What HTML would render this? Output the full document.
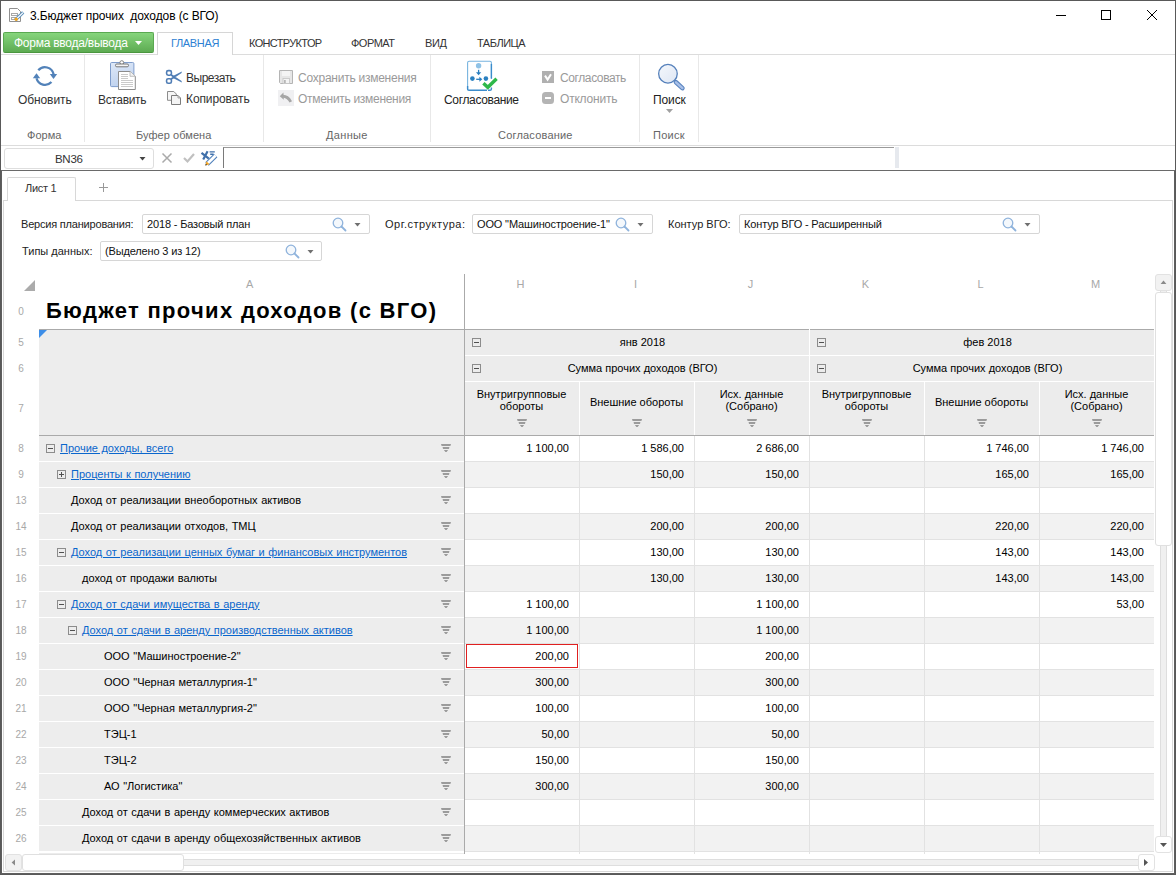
<!DOCTYPE html><html><head><meta charset="utf-8"><style>html,body{margin:0;padding:0}body{width:1176px;height:875px;position:relative;overflow:hidden;background:#fff;font-family:"Liberation Sans", sans-serif}div{box-sizing:border-box}svg{position:absolute;overflow:visible}</style></head><body>
<svg style="left:9px;top:8px" width="16" height="14" viewBox="0 0 16 14"><path d="M0.5 0.5 H8.5 L11.5 3.5 V13.5 H0.5 Z" fill="#fff" stroke="#909090"/><rect x="2.5" y="5.5" width="6" height="2" fill="none" stroke="#a8a8a8"/><rect x="2.5" y="9.5" width="6" height="2" fill="none" stroke="#a8a8a8"/><path d="M6.2 12.2 L14.2 4.4" stroke="#5a8fbd" stroke-width="3.2"/><path d="M6.4 12 L14 4.6" stroke="#fff" stroke-width="1.3"/><circle cx="7.2" cy="11.2" r="1.7" fill="#f2a51e"/></svg>
<div style="position:absolute;left:30px;top:8px;font-size:12px;line-height:16px;color:#000;white-space:nowrap;letter-spacing:-0.1px">3.Бюджет прочих&nbsp; доходов (с ВГО)</div>
<svg style="left:1050px;top:5px" width="120" height="20" viewBox="0 0 120 20"><path d="M6 10.5 H16" stroke="#000" stroke-width="1"/><rect x="51.5" y="5.5" width="9" height="9" fill="none" stroke="#000" stroke-width="1"/><path d="M97 5 L107 15 M107 5 L97 15" stroke="#000" stroke-width="1"/></svg>
<div style="position:absolute;left:3px;top:32px;width:151px;height:21px;border:1px solid #5aa951;border-bottom-color:#4a963f;border-radius:2px;background:linear-gradient(#86d57c,#5dab52)"></div>
<div style="position:absolute;left:14px;top:36px;font-size:12px;line-height:15px;color:#fff;white-space:nowrap;letter-spacing:-0.25px">Форма ввода/вывода</div>
<svg style="left:135px;top:41px" width="7" height="4"><path d="M0 0 H7 L3.5 4 Z" fill="#fff"/></svg>
<div style="position:absolute;left:1px;top:54px;width:1174px;height:1px;background:#dcdcdc"></div>
<div style="position:absolute;left:157px;top:32px;width:76px;height:23px;border:1px solid #d6d6d6;border-bottom:none;background:#fff"></div>
<div style="position:absolute;left:171px;top:36px;font-size:11px;line-height:15px;color:#2d7fd3;white-space:nowrap;letter-spacing:-0.35px">ГЛАВНАЯ</div>
<div style="position:absolute;left:249px;top:36px;font-size:11px;line-height:15px;color:#333;white-space:nowrap;letter-spacing:-0.65px">КОНСТРУКТОР</div>
<div style="position:absolute;left:351px;top:36px;font-size:11px;line-height:15px;color:#333;white-space:nowrap;letter-spacing:-0.5px">ФОРМАТ</div>
<div style="position:absolute;left:425px;top:36px;font-size:11px;line-height:15px;color:#333;white-space:nowrap;letter-spacing:-0.4px">ВИД</div>
<div style="position:absolute;left:477px;top:36px;font-size:11px;line-height:15px;color:#333;white-space:nowrap;letter-spacing:-0.5px">ТАБЛИЦА</div>
<div style="position:absolute;left:84px;top:55px;width:1px;height:87px;background:#e8e8e8"></div>
<div style="position:absolute;left:263px;top:55px;width:1px;height:87px;background:#e8e8e8"></div>
<div style="position:absolute;left:430px;top:55px;width:1px;height:87px;background:#e8e8e8"></div>
<div style="position:absolute;left:639px;top:55px;width:1px;height:87px;background:#e8e8e8"></div>
<div style="position:absolute;left:698px;top:55px;width:1px;height:87px;background:#e8e8e8"></div>
<div style="position:absolute;left:1px;top:145px;width:1174px;height:1px;background:#dcdcdc"></div>
<svg style="left:33px;top:64px" width="25" height="24" viewBox="0 0 25 24"><g fill="none" stroke="#5282b9" stroke-width="2.3"><path d="M5.3 6.3 A8.8 8.8 0 0 1 20.6 10.2"/><path d="M18.45 18 A8.8 8.8 0 0 1 3.5 14.2"/></g><path d="M16.8 10 H24.2 L20.5 15 Z" fill="#5282b9"/><path d="M-0.2 14.3 H7.2 L3.5 9.3 Z" fill="#5282b9"/></svg>
<div style="position:absolute;left:18px;top:93px;font-size:12px;line-height:15px;color:#333;white-space:nowrap;letter-spacing:-0.1px">Обновить</div>
<svg style="left:108px;top:59px" width="30" height="33" viewBox="0 0 30 33"><defs><linearGradient id="pg" x1="0" y1="0" x2="0.3" y2="1"><stop offset="0" stop-color="#dfe9f8"/><stop offset="1" stop-color="#bfd2ee"/></linearGradient></defs><rect x="2.5" y="3.5" width="23.4" height="24.1" rx="1.2" fill="url(#pg)" stroke="#7f9dcc"/><circle cx="13.8" cy="3.6" r="1.9" fill="#fff" stroke="#777" stroke-width="0.9"/><rect x="7.5" y="5" width="13" height="2.8" rx="1.3" fill="#f4f4f4" stroke="#6a6a6a" stroke-width="0.9"/><path d="M10.5 12.5 H22 L27.3 17.3 V30.5 H10.5 Z" fill="#fff" stroke="#8c8c8c"/><path d="M22 12.5 V17.3 H27.3" fill="#f2f2f2" stroke="#b0b0b0" stroke-width="0.8"/><g stroke="#c4c4c4" stroke-width="0.9"><path d="M13 15.5 H20 M13 17.5 H20 M13 19.5 H20 M13 21.5 H25 M13 23.5 H25 M13 25.5 H25 M13 27.5 H25"/></g></svg>
<div style="position:absolute;left:98px;top:93px;font-size:12px;line-height:15px;color:#333;white-space:nowrap;letter-spacing:-0.35px">Вставить</div>
<svg style="left:162px;top:66px" width="24" height="20" viewBox="0 0 24 20"><g fill="none" stroke="#4f7db5" stroke-width="1.6"><rect x="4.6" y="4.6" width="4.8" height="4.6" rx="1.6"/><rect x="4.6" y="12.7" width="4.8" height="4.6" rx="1.6"/></g><path d="M9 8.8 L12 11 L9 13.2" fill="none" stroke="#4f7db5" stroke-width="1.8"/><path d="M11 10 L19.8 5.6 L19.6 7 L12.5 11.8 Z M11 12 L19.8 16.4 L19.6 15 L12.5 10.2 Z" fill="#4f7db5"/><circle cx="12" cy="11" r="1.3" fill="#4f7db5"/></svg>
<div style="position:absolute;left:186px;top:71px;font-size:12px;line-height:15px;color:#333;white-space:nowrap;letter-spacing:-0.5px">Вырезать</div>
<svg style="left:162px;top:86px" width="24" height="22" viewBox="0 0 24 22"><path d="M5.5 5.5 H11.8 L14.3 8 V14.3 H5.5 Z" fill="#f6f6f6" stroke="#8c8c8c"/><path d="M9.5 9.5 H16 L18.5 12 V18.5 H9.5 Z" fill="#f4f4f4" stroke="#7c7c7c"/><path d="M16 9.5 V12 H18.5" fill="none" stroke="#a0a0a0"/></svg>
<div style="position:absolute;left:186px;top:92px;font-size:12px;line-height:15px;color:#333;white-space:nowrap;letter-spacing:-0.1px">Копировать</div>
<svg style="left:274px;top:66px" width="24" height="22" viewBox="0 0 24 22"><path d="M5.5 4.5 H18.5 V17.5 H6.5 L5.5 16.5 Z" fill="#e6e6e6" stroke="#b4b4b4"/><rect x="8" y="5" width="8" height="5" fill="#f4f4f4"/><rect x="9" y="12.5" width="6.5" height="5" fill="#f4f4f4" stroke="#c4c4c4" stroke-width="0.8"/><rect x="10.2" y="14" width="1.4" height="3" fill="#a8a8a8"/></svg>
<div style="position:absolute;left:298px;top:71px;font-size:12px;line-height:15px;color:#9a9a9a;white-space:nowrap;letter-spacing:-0.25px">Сохранить изменения</div>
<svg style="left:274px;top:66px" width="24" height="42" viewBox="0 0 24 42"><rect x="4" y="24" width="16" height="16" fill="#f0f0f2"/><path d="M9.4 26.6 L5.8 30.2 L9.8 33.8 Z" fill="#a6a6a6"/><path d="M8 30.3 Q13.5 29.8 16.8 35.8" fill="none" stroke="#a6a6a6" stroke-width="2.8"/></svg>
<div style="position:absolute;left:298px;top:92px;font-size:12px;line-height:15px;color:#9a9a9a;white-space:nowrap;letter-spacing:-0.3px">Отменить изменения</div>
<svg style="left:458px;top:56px" width="44" height="40" viewBox="0 0 44 40"><path d="M9.6 33.8 V6.8 Q9.6 5.3 11.1 5.3 H32 Q33.4 5.3 33.4 6.8 V23" fill="#fff" stroke="#78b4df" stroke-width="1.1"/><path d="M9.6 30 V33 Q9.6 34.3 11 34.3 H29" fill="none" stroke="#3b8ccc" stroke-width="1.4"/><path d="M33.4 8 V22.5" stroke="#3b8ccc" stroke-width="1.4"/><path d="M33.4 31.5 V33 Q33.4 34.3 32 34.3 H30" fill="none" stroke="#3b8ccc" stroke-width="1.4"/><circle cx="20.6" cy="9.8" r="2.7" fill="#8fc2e6"/><path d="M20.6 13.8 V17" stroke="#2a7fc0" stroke-width="1.3"/><path d="M18 16.2 H23.2 L20.6 19.2 Z" fill="#2a7fc0"/><circle cx="14.4" cy="22.6" r="2.3" fill="#2a80c0"/><circle cx="27.9" cy="22.6" r="2.3" fill="#2a80c0"/><path d="M18.2 23.3 H22.5" stroke="#2a7fc0" stroke-width="1.3"/><path d="M21.4 20.8 V25.8 L24.3 23.3 Z" fill="#2a7fc0"/><path d="M25.4 27.2 L29.8 31.3 L38.6 22.8" fill="none" stroke="#2eb84a" stroke-width="3.4"/></svg>
<div style="position:absolute;left:444px;top:93px;font-size:12px;line-height:15px;color:#222;white-space:nowrap;letter-spacing:-0.35px">Согласование</div>
<svg style="left:542px;top:71px" width="12" height="12" viewBox="0 0 12 12"><rect x="0" y="0" width="12" height="12" fill="#b0b0b0"/><path d="M3 4.6 L5.6 8.6 L9 3.2" fill="none" stroke="#fff" stroke-width="2"/></svg>
<div style="position:absolute;left:560px;top:71px;font-size:12px;line-height:15px;color:#9a9a9a;white-space:nowrap;letter-spacing:-0.4px">Согласовать</div>
<svg style="left:542px;top:92px" width="12" height="12" viewBox="0 0 12 12"><rect x="0" y="0" width="12" height="12" rx="3.5" fill="#b4b4b4"/><rect x="3" y="5" width="6" height="2" fill="#fff"/></svg>
<div style="position:absolute;left:560px;top:92px;font-size:12px;line-height:15px;color:#9a9a9a;white-space:nowrap;letter-spacing:-0.2px">Отклонить</div>
<svg style="left:650px;top:58px" width="40" height="40" viewBox="0 0 40 40"><defs><linearGradient id="sg" x1="0" y1="0" x2="1" y2="1"><stop offset="0" stop-color="#f4f7fc"/><stop offset="1" stop-color="#dfe7f4"/></linearGradient></defs><path d="M26 24.3 L32.4 30.1" stroke="#5a85c0" stroke-width="4.6" stroke-linecap="round"/><path d="M26 24.3 L32.4 30.1" stroke="#a9c0e8" stroke-width="2.4" stroke-linecap="round"/><circle cx="17.95" cy="15.75" r="9.3" fill="url(#sg)" stroke="#5580bb" stroke-width="1.3"/></svg>
<div style="position:absolute;left:653px;top:93px;font-size:12px;line-height:15px;color:#222;white-space:nowrap;letter-spacing:-0.1px">Поиск</div>
<svg style="left:666px;top:109px" width="8" height="5"><path d="M0 0 H7 L3.5 4 Z" fill="#a0a0a0"/></svg>
<div style="position:absolute;left:27px;top:128px;font-size:11px;line-height:15px;color:#666;white-space:nowrap;letter-spacing:0.05px">Форма</div>
<div style="position:absolute;left:136px;top:128px;font-size:11px;line-height:15px;color:#666;white-space:nowrap;letter-spacing:0.05px">Буфер обмена</div>
<div style="position:absolute;left:326px;top:128px;font-size:11px;line-height:15px;color:#666;white-space:nowrap;letter-spacing:0.35px">Данные</div>
<div style="position:absolute;left:498px;top:128px;font-size:11px;line-height:15px;color:#666;white-space:nowrap;letter-spacing:0.2px">Согласование</div>
<div style="position:absolute;left:653px;top:128px;font-size:11px;line-height:15px;color:#666;white-space:nowrap;letter-spacing:0.3px">Поиск</div>
<div style="position:absolute;left:4px;top:148px;width:150px;height:21px;border:1px solid #dedede;border-radius:3px;background:#fff"></div>
<div style="position:absolute;left:55px;top:152px;font-size:11.5px;line-height:15px;color:#333;white-space:nowrap;letter-spacing:-0.3px">BN36</div>
<svg style="left:139px;top:157px" width="7" height="4"><path d="M0.5 0 H6.5 L3.5 3.5 Z" fill="#444"/></svg>
<svg style="left:161px;top:152px" width="12" height="12" viewBox="0 0 12 12"><path d="M1.5 1.5 L10.5 10.5 M10.5 1.5 L1.5 10.5" stroke="#aaa" stroke-width="1.5"/></svg>
<svg style="left:183px;top:152px" width="12" height="12" viewBox="0 0 12 12"><path d="M1 6 L4.5 9.5 L11 2" fill="none" stroke="#c0c0c0" stroke-width="2.2"/></svg>
<svg style="left:196px;top:146px" width="26" height="24" viewBox="0 0 26 24"><path d="M5.5 6.8 L12.8 12.6 M11.6 5.3 L7.2 13.6" stroke="#4070aa" stroke-width="2.2"/><path d="M13.6 5.9 H18.8 M14.2 8.3 H17.5" stroke="#4070aa" stroke-width="1.4"/><path d="M11 18 L19.6 9.4" stroke="#4f80bb" stroke-width="5"/><path d="M11 18 L19.6 9.4" stroke="#fff" stroke-width="2.8"/><path d="M9.4 19.4 L10.4 15.2 L13.6 18.2 Z" fill="#f5a623"/><path d="M9.2 19.6 L9.8 17.6 L11.2 19 Z" fill="#444"/></svg>
<div style="position:absolute;left:223px;top:147px;width:671px;height:21px;border-left:1px solid #7a7a7a;border-top:1px solid #9a9a9a"></div>
<div style="position:absolute;left:895px;top:147px;width:4px;height:21px;background:#e6e9ee"></div>
<div style="position:absolute;left:1px;top:170px;width:1174px;height:1px;background:#6a6a6a"></div>
<div style="position:absolute;left:0px;top:0px;width:1176px;height:875px;border:1px solid #595959"></div>
<div style="position:absolute;left:1px;top:171px;width:1px;height:703px;background:#5f5f5f"></div>
<div style="position:absolute;left:1174px;top:171px;width:1px;height:703px;background:#5f5f5f"></div>
<div style="position:absolute;left:1px;top:873px;width:1174px;height:1px;background:#5f5f5f"></div>
<div style="position:absolute;left:7px;top:177px;width:69px;height:24px;border:1px solid #d8d8d8;border-bottom:none;border-radius:2px 2px 0 0;background:#fff"></div>
<div style="position:absolute;left:25px;top:181px;font-size:11px;line-height:15px;color:#333;white-space:nowrap;letter-spacing:-0.3px">Лист 1</div>
<svg style="left:99px;top:183px" width="9" height="9"><path d="M4.5 0 V9 M0 4.5 H9" stroke="#999" stroke-width="1"/></svg>
<div style="position:absolute;left:3px;top:200px;width:5px;height:1px;background:#d8d8d8"></div>
<div style="position:absolute;left:75px;top:200px;width:1098px;height:1px;background:#d8d8d8"></div>
<div style="position:absolute;left:3px;top:200px;width:1px;height:672px;background:#d8d8d8"></div>
<div style="position:absolute;left:1172px;top:200px;width:1px;height:672px;background:#d8d8d8"></div>
<div style="position:absolute;left:3px;top:871px;width:1170px;height:1px;background:#d8d8d8"></div>
<div style="position:absolute;left:21px;top:217px;font-size:11px;line-height:14px;color:#222;white-space:nowrap;letter-spacing:-0.2px">Версия планирования:</div>
<div style="position:absolute;left:142px;top:214px;width:228px;height:20px;border:1px solid #d6d6d6;border-radius:2px;background:#fff"></div>
<div style="position:absolute;left:147px;top:217px;font-size:11px;line-height:14px;color:#111;white-space:nowrap;letter-spacing:-0.15px">2018 - Базовый план</div>
<svg style="left:332px;top:217px" width="16" height="15" viewBox="0 0 16 15"><circle cx="6" cy="6" r="4.8" fill="#f4f8fc" stroke="#8fb3dc" stroke-width="1.3"/><path d="M9.5 9.5 L13.5 13.5" stroke="#8fb3dc" stroke-width="1.8" stroke-linecap="round"/></svg>
<svg style="left:354px;top:223px" width="7" height="4"><path d="M0.5 0 H6.5 L3.5 3.5 Z" fill="#707070"/></svg>
<div style="position:absolute;left:385px;top:217px;font-size:11px;line-height:14px;color:#222;white-space:nowrap;letter-spacing:0.52px">Орг.структура:</div>
<div style="position:absolute;left:472px;top:214px;width:181px;height:20px;border:1px solid #d6d6d6;border-radius:2px;background:#fff"></div>
<div style="position:absolute;left:477px;top:217px;font-size:11px;line-height:14px;color:#111;white-space:nowrap;letter-spacing:-0.15px">ООО "Машиностроение-1"</div>
<svg style="left:615px;top:217px" width="16" height="15" viewBox="0 0 16 15"><circle cx="6" cy="6" r="4.8" fill="#f4f8fc" stroke="#8fb3dc" stroke-width="1.3"/><path d="M9.5 9.5 L13.5 13.5" stroke="#8fb3dc" stroke-width="1.8" stroke-linecap="round"/></svg>
<svg style="left:637px;top:223px" width="7" height="4"><path d="M0.5 0 H6.5 L3.5 3.5 Z" fill="#707070"/></svg>
<div style="position:absolute;left:668px;top:217px;font-size:11px;line-height:14px;color:#222;white-space:nowrap;letter-spacing:0px">Контур ВГО:</div>
<div style="position:absolute;left:739px;top:214px;width:301px;height:20px;border:1px solid #d6d6d6;border-radius:2px;background:#fff"></div>
<div style="position:absolute;left:744px;top:217px;font-size:11px;line-height:14px;color:#111;white-space:nowrap;letter-spacing:-0.15px">Контур ВГО - Расширенный</div>
<svg style="left:1002px;top:217px" width="16" height="15" viewBox="0 0 16 15"><circle cx="6" cy="6" r="4.8" fill="#f4f8fc" stroke="#8fb3dc" stroke-width="1.3"/><path d="M9.5 9.5 L13.5 13.5" stroke="#8fb3dc" stroke-width="1.8" stroke-linecap="round"/></svg>
<svg style="left:1024px;top:223px" width="7" height="4"><path d="M0.5 0 H6.5 L3.5 3.5 Z" fill="#707070"/></svg>
<div style="position:absolute;left:22px;top:244px;font-size:11px;line-height:14px;color:#222;white-space:nowrap;letter-spacing:0px">Типы данных:</div>
<div style="position:absolute;left:100px;top:241px;width:222px;height:20px;border:1px solid #d6d6d6;border-radius:2px;background:#fff"></div>
<div style="position:absolute;left:105px;top:244px;font-size:11px;line-height:14px;color:#111;white-space:nowrap;letter-spacing:-0.15px">(Выделено 3 из 12)</div>
<svg style="left:285px;top:244px" width="16" height="15" viewBox="0 0 16 15"><circle cx="6" cy="6" r="4.8" fill="#f4f8fc" stroke="#8fb3dc" stroke-width="1.3"/><path d="M9.5 9.5 L13.5 13.5" stroke="#8fb3dc" stroke-width="1.8" stroke-linecap="round"/></svg>
<svg style="left:307px;top:250px" width="7" height="4"><path d="M0.5 0 H6.5 L3.5 3.5 Z" fill="#707070"/></svg>
<div style="position:absolute;left:246px;top:277px;font-size:11px;line-height:14px;color:#a8a8a8;white-space:nowrap;">A</div>
<div style="position:absolute;left:463px;top:277px;width:115px;text-align:center;font-size:11px;line-height:14px;color:#a8a8a8">H</div>
<div style="position:absolute;left:578px;top:277px;width:115px;text-align:center;font-size:11px;line-height:14px;color:#a8a8a8">I</div>
<div style="position:absolute;left:693px;top:277px;width:115px;text-align:center;font-size:11px;line-height:14px;color:#a8a8a8">J</div>
<div style="position:absolute;left:808px;top:277px;width:115px;text-align:center;font-size:11px;line-height:14px;color:#a8a8a8">K</div>
<div style="position:absolute;left:923px;top:277px;width:115px;text-align:center;font-size:11px;line-height:14px;color:#a8a8a8">L</div>
<div style="position:absolute;left:1038px;top:277px;width:115px;text-align:center;font-size:11px;line-height:14px;color:#a8a8a8">M</div>
<svg style="left:24px;top:280px" width="12" height="12"><path d="M11 0 V11 H0 Z" fill="#ababab"/></svg>
<div style="position:absolute;left:464px;top:274px;width:1px;height:580px;background:#aaaaaa"></div>
<div style="position:absolute;left:3px;top:305px;width:36px;text-align:center;font-size:10px;line-height:14px;color:#a8a8a8">0</div>
<div style="position:absolute;left:46px;top:298px;font-size:22px;line-height:26px;color:#000;white-space:nowrap;font-weight:bold;letter-spacing:1.3px">Бюджет прочих доходов (с ВГО)</div>
<div style="position:absolute;left:39px;top:330px;width:425px;height:105px;background:#ededed"></div>
<svg style="left:39px;top:330px" width="9" height="9"><path d="M0 0 H8 L0 8 Z" fill="#3d8ee8"/></svg>
<div style="position:absolute;left:465px;top:330px;width:689px;height:105px;background:#ececec"></div>
<div style="position:absolute;left:39px;top:329px;width:1115px;height:1px;background:#aaaaaa"></div>
<div style="position:absolute;left:39px;top:435px;width:1115px;height:1px;background:#aaaaaa"></div>
<div style="position:absolute;left:465px;top:355px;width:689px;height:1px;background:#fff"></div>
<div style="position:absolute;left:465px;top:381px;width:689px;height:1px;background:#fff"></div>
<div style="position:absolute;left:809px;top:329px;width:1px;height:106px;background:#fff"></div>
<div style="position:absolute;left:579px;top:382px;width:1px;height:53px;background:#fff"></div>
<div style="position:absolute;left:694px;top:382px;width:1px;height:53px;background:#fff"></div>
<div style="position:absolute;left:924px;top:382px;width:1px;height:53px;background:#fff"></div>
<div style="position:absolute;left:1039px;top:382px;width:1px;height:53px;background:#fff"></div>
<svg style="left:472px;top:338px" width="9" height="9" viewBox="0 0 9 9"><rect x="0.5" y="0.5" width="8" height="8" fill="none" stroke="#8c8c8c"/><path d="M2 4.5 H7" stroke="#505050" stroke-width="1"/></svg>
<div style="position:absolute;left:470px;top:335px;width:345px;text-align:center;font-size:11px;line-height:14px;color:#000">янв 2018</div>
<svg style="left:472px;top:364px" width="9" height="9" viewBox="0 0 9 9"><rect x="0.5" y="0.5" width="8" height="8" fill="none" stroke="#8c8c8c"/><path d="M2 4.5 H7" stroke="#505050" stroke-width="1"/></svg>
<div style="position:absolute;left:470px;top:361px;width:345px;text-align:center;font-size:11px;line-height:14px;color:#000">Сумма прочих доходов (ВГО)</div>
<div style="position:absolute;left:464px;top:388px;width:115px;text-align:center;font-size:11px;line-height:12px;color:#000">Внутригрупповые<br>обороты</div>
<svg style="left:517px;top:419px" width="10" height="9" viewBox="0 0 10 9"><path d="M0 0 H10 L9.4 2 H0.6 Z M1.6 3 H8.4 L8 5 H2 Z M2.9 6 H7.1 L5.6 8 H4.4 Z" fill="#9b9b9b"/></svg>
<div style="position:absolute;left:579px;top:396px;width:115px;text-align:center;font-size:11px;line-height:12px;color:#000">Внешние обороты</div>
<svg style="left:632px;top:419px" width="10" height="9" viewBox="0 0 10 9"><path d="M0 0 H10 L9.4 2 H0.6 Z M1.6 3 H8.4 L8 5 H2 Z M2.9 6 H7.1 L5.6 8 H4.4 Z" fill="#9b9b9b"/></svg>
<div style="position:absolute;left:694px;top:388px;width:115px;text-align:center;font-size:11px;line-height:12px;color:#000">Исх. данные<br>(Собрано)</div>
<svg style="left:747px;top:419px" width="10" height="9" viewBox="0 0 10 9"><path d="M0 0 H10 L9.4 2 H0.6 Z M1.6 3 H8.4 L8 5 H2 Z M2.9 6 H7.1 L5.6 8 H4.4 Z" fill="#9b9b9b"/></svg>
<svg style="left:817px;top:338px" width="9" height="9" viewBox="0 0 9 9"><rect x="0.5" y="0.5" width="8" height="8" fill="none" stroke="#8c8c8c"/><path d="M2 4.5 H7" stroke="#505050" stroke-width="1"/></svg>
<div style="position:absolute;left:815px;top:335px;width:345px;text-align:center;font-size:11px;line-height:14px;color:#000">фев 2018</div>
<svg style="left:817px;top:364px" width="9" height="9" viewBox="0 0 9 9"><rect x="0.5" y="0.5" width="8" height="8" fill="none" stroke="#8c8c8c"/><path d="M2 4.5 H7" stroke="#505050" stroke-width="1"/></svg>
<div style="position:absolute;left:815px;top:361px;width:345px;text-align:center;font-size:11px;line-height:14px;color:#000">Сумма прочих доходов (ВГО)</div>
<div style="position:absolute;left:809px;top:388px;width:115px;text-align:center;font-size:11px;line-height:12px;color:#000">Внутригрупповые<br>обороты</div>
<svg style="left:862px;top:419px" width="10" height="9" viewBox="0 0 10 9"><path d="M0 0 H10 L9.4 2 H0.6 Z M1.6 3 H8.4 L8 5 H2 Z M2.9 6 H7.1 L5.6 8 H4.4 Z" fill="#9b9b9b"/></svg>
<div style="position:absolute;left:924px;top:396px;width:115px;text-align:center;font-size:11px;line-height:12px;color:#000">Внешние обороты</div>
<svg style="left:977px;top:419px" width="10" height="9" viewBox="0 0 10 9"><path d="M0 0 H10 L9.4 2 H0.6 Z M1.6 3 H8.4 L8 5 H2 Z M2.9 6 H7.1 L5.6 8 H4.4 Z" fill="#9b9b9b"/></svg>
<div style="position:absolute;left:1039px;top:388px;width:115px;text-align:center;font-size:11px;line-height:12px;color:#000">Исх. данные<br>(Собрано)</div>
<svg style="left:1092px;top:419px" width="10" height="9" viewBox="0 0 10 9"><path d="M0 0 H10 L9.4 2 H0.6 Z M1.6 3 H8.4 L8 5 H2 Z M2.9 6 H7.1 L5.6 8 H4.4 Z" fill="#9b9b9b"/></svg>
<div style="position:absolute;left:3px;top:336px;width:36px;text-align:center;font-size:10px;line-height:14px;color:#a8a8a8">5</div>
<div style="position:absolute;left:3px;top:362px;width:36px;text-align:center;font-size:10px;line-height:14px;color:#a8a8a8">6</div>
<div style="position:absolute;left:3px;top:402px;width:36px;text-align:center;font-size:10px;line-height:14px;color:#a8a8a8">7</div>
<div style="position:absolute;left:39px;top:436px;width:425px;height:25px;background:#ededed"></div>
<div style="position:absolute;left:465px;top:436px;width:689px;height:25px;background:#fff"></div>
<div style="position:absolute;left:465px;top:461px;width:689px;height:1px;background:#e2e2e2"></div>
<div style="position:absolute;left:579px;top:436px;width:1px;height:26px;background:#e2e2e2"></div>
<div style="position:absolute;left:694px;top:436px;width:1px;height:26px;background:#e2e2e2"></div>
<div style="position:absolute;left:809px;top:436px;width:1px;height:26px;background:#e2e2e2"></div>
<div style="position:absolute;left:924px;top:436px;width:1px;height:26px;background:#e2e2e2"></div>
<div style="position:absolute;left:1039px;top:436px;width:1px;height:26px;background:#e2e2e2"></div>
<div style="position:absolute;left:3px;top:442px;width:36px;text-align:center;font-size:10px;line-height:14px;color:#a8a8a8">8</div>
<svg style="left:46px;top:444px" width="9" height="9" viewBox="0 0 9 9"><rect x="0.5" y="0.5" width="8" height="8" fill="none" stroke="#8c8c8c"/><path d="M2 4.5 H7" stroke="#505050" stroke-width="1"/></svg>
<div style="position:absolute;left:60px;top:441px;font-size:11px;line-height:14px;color:#0a66cc;white-space:nowrap;text-decoration:underline;word-spacing:0.5px">Прочие доходы, всего</div>
<svg style="left:441px;top:444px" width="10" height="9" viewBox="0 0 10 9"><path d="M0 0 H10 L9.4 2 H0.6 Z M1.6 3 H8.4 L8 5 H2 Z M2.9 6 H7.1 L5.6 8 H4.4 Z" fill="#9b9b9b"/></svg>
<div style="position:absolute;left:465px;top:441px;width:104px;text-align:right;font-size:11px;line-height:14px;color:#000">1 100,00</div>
<div style="position:absolute;left:580px;top:441px;width:104px;text-align:right;font-size:11px;line-height:14px;color:#000">1 586,00</div>
<div style="position:absolute;left:695px;top:441px;width:104px;text-align:right;font-size:11px;line-height:14px;color:#000">2 686,00</div>
<div style="position:absolute;left:925px;top:441px;width:104px;text-align:right;font-size:11px;line-height:14px;color:#000">1 746,00</div>
<div style="position:absolute;left:1040px;top:441px;width:104px;text-align:right;font-size:11px;line-height:14px;color:#000">1 746,00</div>
<div style="position:absolute;left:39px;top:462px;width:425px;height:25px;background:#ededed"></div>
<div style="position:absolute;left:465px;top:462px;width:689px;height:25px;background:#f2f2f2"></div>
<div style="position:absolute;left:465px;top:487px;width:689px;height:1px;background:#e2e2e2"></div>
<div style="position:absolute;left:579px;top:462px;width:1px;height:26px;background:#e2e2e2"></div>
<div style="position:absolute;left:694px;top:462px;width:1px;height:26px;background:#e2e2e2"></div>
<div style="position:absolute;left:809px;top:462px;width:1px;height:26px;background:#e2e2e2"></div>
<div style="position:absolute;left:924px;top:462px;width:1px;height:26px;background:#e2e2e2"></div>
<div style="position:absolute;left:1039px;top:462px;width:1px;height:26px;background:#e2e2e2"></div>
<div style="position:absolute;left:3px;top:468px;width:36px;text-align:center;font-size:10px;line-height:14px;color:#a8a8a8">9</div>
<svg style="left:57px;top:470px" width="9" height="9" viewBox="0 0 9 9"><rect x="0.5" y="0.5" width="8" height="8" fill="none" stroke="#8c8c8c"/><path d="M2 4.5 H7" stroke="#505050" stroke-width="1"/><path d="M4.5 2 V7" stroke="#505050" stroke-width="1"/></svg>
<div style="position:absolute;left:71px;top:467px;font-size:11px;line-height:14px;color:#0a66cc;white-space:nowrap;text-decoration:underline;word-spacing:0.5px">Проценты к получению</div>
<svg style="left:441px;top:470px" width="10" height="9" viewBox="0 0 10 9"><path d="M0 0 H10 L9.4 2 H0.6 Z M1.6 3 H8.4 L8 5 H2 Z M2.9 6 H7.1 L5.6 8 H4.4 Z" fill="#9b9b9b"/></svg>
<div style="position:absolute;left:580px;top:467px;width:104px;text-align:right;font-size:11px;line-height:14px;color:#000">150,00</div>
<div style="position:absolute;left:695px;top:467px;width:104px;text-align:right;font-size:11px;line-height:14px;color:#000">150,00</div>
<div style="position:absolute;left:925px;top:467px;width:104px;text-align:right;font-size:11px;line-height:14px;color:#000">165,00</div>
<div style="position:absolute;left:1040px;top:467px;width:104px;text-align:right;font-size:11px;line-height:14px;color:#000">165,00</div>
<div style="position:absolute;left:39px;top:488px;width:425px;height:25px;background:#ededed"></div>
<div style="position:absolute;left:465px;top:488px;width:689px;height:25px;background:#fff"></div>
<div style="position:absolute;left:465px;top:513px;width:689px;height:1px;background:#e2e2e2"></div>
<div style="position:absolute;left:579px;top:488px;width:1px;height:26px;background:#e2e2e2"></div>
<div style="position:absolute;left:694px;top:488px;width:1px;height:26px;background:#e2e2e2"></div>
<div style="position:absolute;left:809px;top:488px;width:1px;height:26px;background:#e2e2e2"></div>
<div style="position:absolute;left:924px;top:488px;width:1px;height:26px;background:#e2e2e2"></div>
<div style="position:absolute;left:1039px;top:488px;width:1px;height:26px;background:#e2e2e2"></div>
<div style="position:absolute;left:3px;top:494px;width:36px;text-align:center;font-size:10px;line-height:14px;color:#a8a8a8">13</div>
<div style="position:absolute;left:71px;top:493px;font-size:11px;line-height:14px;color:#000;white-space:nowrap;word-spacing:0.5px">Доход от реализации внеоборотных активов</div>
<svg style="left:441px;top:496px" width="10" height="9" viewBox="0 0 10 9"><path d="M0 0 H10 L9.4 2 H0.6 Z M1.6 3 H8.4 L8 5 H2 Z M2.9 6 H7.1 L5.6 8 H4.4 Z" fill="#9b9b9b"/></svg>
<div style="position:absolute;left:39px;top:514px;width:425px;height:25px;background:#ededed"></div>
<div style="position:absolute;left:465px;top:514px;width:689px;height:25px;background:#f2f2f2"></div>
<div style="position:absolute;left:465px;top:539px;width:689px;height:1px;background:#e2e2e2"></div>
<div style="position:absolute;left:579px;top:514px;width:1px;height:26px;background:#e2e2e2"></div>
<div style="position:absolute;left:694px;top:514px;width:1px;height:26px;background:#e2e2e2"></div>
<div style="position:absolute;left:809px;top:514px;width:1px;height:26px;background:#e2e2e2"></div>
<div style="position:absolute;left:924px;top:514px;width:1px;height:26px;background:#e2e2e2"></div>
<div style="position:absolute;left:1039px;top:514px;width:1px;height:26px;background:#e2e2e2"></div>
<div style="position:absolute;left:3px;top:520px;width:36px;text-align:center;font-size:10px;line-height:14px;color:#a8a8a8">14</div>
<div style="position:absolute;left:71px;top:519px;font-size:11px;line-height:14px;color:#000;white-space:nowrap;word-spacing:0.5px">Доход от реализации отходов, ТМЦ</div>
<svg style="left:441px;top:522px" width="10" height="9" viewBox="0 0 10 9"><path d="M0 0 H10 L9.4 2 H0.6 Z M1.6 3 H8.4 L8 5 H2 Z M2.9 6 H7.1 L5.6 8 H4.4 Z" fill="#9b9b9b"/></svg>
<div style="position:absolute;left:580px;top:519px;width:104px;text-align:right;font-size:11px;line-height:14px;color:#000">200,00</div>
<div style="position:absolute;left:695px;top:519px;width:104px;text-align:right;font-size:11px;line-height:14px;color:#000">200,00</div>
<div style="position:absolute;left:925px;top:519px;width:104px;text-align:right;font-size:11px;line-height:14px;color:#000">220,00</div>
<div style="position:absolute;left:1040px;top:519px;width:104px;text-align:right;font-size:11px;line-height:14px;color:#000">220,00</div>
<div style="position:absolute;left:39px;top:540px;width:425px;height:25px;background:#ededed"></div>
<div style="position:absolute;left:465px;top:540px;width:689px;height:25px;background:#fff"></div>
<div style="position:absolute;left:465px;top:565px;width:689px;height:1px;background:#e2e2e2"></div>
<div style="position:absolute;left:579px;top:540px;width:1px;height:26px;background:#e2e2e2"></div>
<div style="position:absolute;left:694px;top:540px;width:1px;height:26px;background:#e2e2e2"></div>
<div style="position:absolute;left:809px;top:540px;width:1px;height:26px;background:#e2e2e2"></div>
<div style="position:absolute;left:924px;top:540px;width:1px;height:26px;background:#e2e2e2"></div>
<div style="position:absolute;left:1039px;top:540px;width:1px;height:26px;background:#e2e2e2"></div>
<div style="position:absolute;left:3px;top:546px;width:36px;text-align:center;font-size:10px;line-height:14px;color:#a8a8a8">15</div>
<svg style="left:57px;top:548px" width="9" height="9" viewBox="0 0 9 9"><rect x="0.5" y="0.5" width="8" height="8" fill="none" stroke="#8c8c8c"/><path d="M2 4.5 H7" stroke="#505050" stroke-width="1"/></svg>
<div style="position:absolute;left:71px;top:545px;font-size:11px;line-height:14px;color:#0a66cc;white-space:nowrap;text-decoration:underline;word-spacing:0.5px">Доход от реализации ценных бумаг и финансовых инструментов</div>
<svg style="left:441px;top:548px" width="10" height="9" viewBox="0 0 10 9"><path d="M0 0 H10 L9.4 2 H0.6 Z M1.6 3 H8.4 L8 5 H2 Z M2.9 6 H7.1 L5.6 8 H4.4 Z" fill="#9b9b9b"/></svg>
<div style="position:absolute;left:580px;top:545px;width:104px;text-align:right;font-size:11px;line-height:14px;color:#000">130,00</div>
<div style="position:absolute;left:695px;top:545px;width:104px;text-align:right;font-size:11px;line-height:14px;color:#000">130,00</div>
<div style="position:absolute;left:925px;top:545px;width:104px;text-align:right;font-size:11px;line-height:14px;color:#000">143,00</div>
<div style="position:absolute;left:1040px;top:545px;width:104px;text-align:right;font-size:11px;line-height:14px;color:#000">143,00</div>
<div style="position:absolute;left:39px;top:566px;width:425px;height:25px;background:#ededed"></div>
<div style="position:absolute;left:465px;top:566px;width:689px;height:25px;background:#f2f2f2"></div>
<div style="position:absolute;left:465px;top:591px;width:689px;height:1px;background:#e2e2e2"></div>
<div style="position:absolute;left:579px;top:566px;width:1px;height:26px;background:#e2e2e2"></div>
<div style="position:absolute;left:694px;top:566px;width:1px;height:26px;background:#e2e2e2"></div>
<div style="position:absolute;left:809px;top:566px;width:1px;height:26px;background:#e2e2e2"></div>
<div style="position:absolute;left:924px;top:566px;width:1px;height:26px;background:#e2e2e2"></div>
<div style="position:absolute;left:1039px;top:566px;width:1px;height:26px;background:#e2e2e2"></div>
<div style="position:absolute;left:3px;top:572px;width:36px;text-align:center;font-size:10px;line-height:14px;color:#a8a8a8">16</div>
<div style="position:absolute;left:82px;top:571px;font-size:11px;line-height:14px;color:#000;white-space:nowrap;word-spacing:0.5px">доход от продажи валюты</div>
<svg style="left:441px;top:574px" width="10" height="9" viewBox="0 0 10 9"><path d="M0 0 H10 L9.4 2 H0.6 Z M1.6 3 H8.4 L8 5 H2 Z M2.9 6 H7.1 L5.6 8 H4.4 Z" fill="#9b9b9b"/></svg>
<div style="position:absolute;left:580px;top:571px;width:104px;text-align:right;font-size:11px;line-height:14px;color:#000">130,00</div>
<div style="position:absolute;left:695px;top:571px;width:104px;text-align:right;font-size:11px;line-height:14px;color:#000">130,00</div>
<div style="position:absolute;left:925px;top:571px;width:104px;text-align:right;font-size:11px;line-height:14px;color:#000">143,00</div>
<div style="position:absolute;left:1040px;top:571px;width:104px;text-align:right;font-size:11px;line-height:14px;color:#000">143,00</div>
<div style="position:absolute;left:39px;top:592px;width:425px;height:25px;background:#ededed"></div>
<div style="position:absolute;left:465px;top:592px;width:689px;height:25px;background:#fff"></div>
<div style="position:absolute;left:465px;top:617px;width:689px;height:1px;background:#e2e2e2"></div>
<div style="position:absolute;left:579px;top:592px;width:1px;height:26px;background:#e2e2e2"></div>
<div style="position:absolute;left:694px;top:592px;width:1px;height:26px;background:#e2e2e2"></div>
<div style="position:absolute;left:809px;top:592px;width:1px;height:26px;background:#e2e2e2"></div>
<div style="position:absolute;left:924px;top:592px;width:1px;height:26px;background:#e2e2e2"></div>
<div style="position:absolute;left:1039px;top:592px;width:1px;height:26px;background:#e2e2e2"></div>
<div style="position:absolute;left:3px;top:598px;width:36px;text-align:center;font-size:10px;line-height:14px;color:#a8a8a8">17</div>
<svg style="left:57px;top:600px" width="9" height="9" viewBox="0 0 9 9"><rect x="0.5" y="0.5" width="8" height="8" fill="none" stroke="#8c8c8c"/><path d="M2 4.5 H7" stroke="#505050" stroke-width="1"/></svg>
<div style="position:absolute;left:71px;top:597px;font-size:11px;line-height:14px;color:#0a66cc;white-space:nowrap;text-decoration:underline;word-spacing:0.5px">Доход от сдачи имущества в аренду</div>
<svg style="left:441px;top:600px" width="10" height="9" viewBox="0 0 10 9"><path d="M0 0 H10 L9.4 2 H0.6 Z M1.6 3 H8.4 L8 5 H2 Z M2.9 6 H7.1 L5.6 8 H4.4 Z" fill="#9b9b9b"/></svg>
<div style="position:absolute;left:465px;top:597px;width:104px;text-align:right;font-size:11px;line-height:14px;color:#000">1 100,00</div>
<div style="position:absolute;left:695px;top:597px;width:104px;text-align:right;font-size:11px;line-height:14px;color:#000">1 100,00</div>
<div style="position:absolute;left:1040px;top:597px;width:104px;text-align:right;font-size:11px;line-height:14px;color:#000">53,00</div>
<div style="position:absolute;left:39px;top:618px;width:425px;height:25px;background:#ededed"></div>
<div style="position:absolute;left:465px;top:618px;width:689px;height:25px;background:#f2f2f2"></div>
<div style="position:absolute;left:465px;top:643px;width:689px;height:1px;background:#e2e2e2"></div>
<div style="position:absolute;left:579px;top:618px;width:1px;height:26px;background:#e2e2e2"></div>
<div style="position:absolute;left:694px;top:618px;width:1px;height:26px;background:#e2e2e2"></div>
<div style="position:absolute;left:809px;top:618px;width:1px;height:26px;background:#e2e2e2"></div>
<div style="position:absolute;left:924px;top:618px;width:1px;height:26px;background:#e2e2e2"></div>
<div style="position:absolute;left:1039px;top:618px;width:1px;height:26px;background:#e2e2e2"></div>
<div style="position:absolute;left:3px;top:624px;width:36px;text-align:center;font-size:10px;line-height:14px;color:#a8a8a8">18</div>
<svg style="left:68px;top:626px" width="9" height="9" viewBox="0 0 9 9"><rect x="0.5" y="0.5" width="8" height="8" fill="none" stroke="#8c8c8c"/><path d="M2 4.5 H7" stroke="#505050" stroke-width="1"/></svg>
<div style="position:absolute;left:82px;top:623px;font-size:11px;line-height:14px;color:#0a66cc;white-space:nowrap;text-decoration:underline;word-spacing:0.5px">Доход от сдачи в аренду производственных активов</div>
<svg style="left:441px;top:626px" width="10" height="9" viewBox="0 0 10 9"><path d="M0 0 H10 L9.4 2 H0.6 Z M1.6 3 H8.4 L8 5 H2 Z M2.9 6 H7.1 L5.6 8 H4.4 Z" fill="#9b9b9b"/></svg>
<div style="position:absolute;left:465px;top:623px;width:104px;text-align:right;font-size:11px;line-height:14px;color:#000">1 100,00</div>
<div style="position:absolute;left:695px;top:623px;width:104px;text-align:right;font-size:11px;line-height:14px;color:#000">1 100,00</div>
<div style="position:absolute;left:39px;top:644px;width:425px;height:25px;background:#ededed"></div>
<div style="position:absolute;left:465px;top:644px;width:689px;height:25px;background:#fff"></div>
<div style="position:absolute;left:465px;top:669px;width:689px;height:1px;background:#e2e2e2"></div>
<div style="position:absolute;left:579px;top:644px;width:1px;height:26px;background:#e2e2e2"></div>
<div style="position:absolute;left:694px;top:644px;width:1px;height:26px;background:#e2e2e2"></div>
<div style="position:absolute;left:809px;top:644px;width:1px;height:26px;background:#e2e2e2"></div>
<div style="position:absolute;left:924px;top:644px;width:1px;height:26px;background:#e2e2e2"></div>
<div style="position:absolute;left:1039px;top:644px;width:1px;height:26px;background:#e2e2e2"></div>
<div style="position:absolute;left:3px;top:650px;width:36px;text-align:center;font-size:10px;line-height:14px;color:#a8a8a8">19</div>
<div style="position:absolute;left:104px;top:649px;font-size:11px;line-height:14px;color:#000;white-space:nowrap;word-spacing:0.5px">ООО "Машиностроение-2"</div>
<svg style="left:441px;top:652px" width="10" height="9" viewBox="0 0 10 9"><path d="M0 0 H10 L9.4 2 H0.6 Z M1.6 3 H8.4 L8 5 H2 Z M2.9 6 H7.1 L5.6 8 H4.4 Z" fill="#9b9b9b"/></svg>
<div style="position:absolute;left:465px;top:649px;width:104px;text-align:right;font-size:11px;line-height:14px;color:#000">200,00</div>
<div style="position:absolute;left:695px;top:649px;width:104px;text-align:right;font-size:11px;line-height:14px;color:#000">200,00</div>
<div style="position:absolute;left:39px;top:670px;width:425px;height:25px;background:#ededed"></div>
<div style="position:absolute;left:465px;top:670px;width:689px;height:25px;background:#f2f2f2"></div>
<div style="position:absolute;left:465px;top:695px;width:689px;height:1px;background:#e2e2e2"></div>
<div style="position:absolute;left:579px;top:670px;width:1px;height:26px;background:#e2e2e2"></div>
<div style="position:absolute;left:694px;top:670px;width:1px;height:26px;background:#e2e2e2"></div>
<div style="position:absolute;left:809px;top:670px;width:1px;height:26px;background:#e2e2e2"></div>
<div style="position:absolute;left:924px;top:670px;width:1px;height:26px;background:#e2e2e2"></div>
<div style="position:absolute;left:1039px;top:670px;width:1px;height:26px;background:#e2e2e2"></div>
<div style="position:absolute;left:3px;top:676px;width:36px;text-align:center;font-size:10px;line-height:14px;color:#a8a8a8">20</div>
<div style="position:absolute;left:104px;top:675px;font-size:11px;line-height:14px;color:#000;white-space:nowrap;word-spacing:0.5px">ООО "Черная металлургия-1"</div>
<svg style="left:441px;top:678px" width="10" height="9" viewBox="0 0 10 9"><path d="M0 0 H10 L9.4 2 H0.6 Z M1.6 3 H8.4 L8 5 H2 Z M2.9 6 H7.1 L5.6 8 H4.4 Z" fill="#9b9b9b"/></svg>
<div style="position:absolute;left:465px;top:675px;width:104px;text-align:right;font-size:11px;line-height:14px;color:#000">300,00</div>
<div style="position:absolute;left:695px;top:675px;width:104px;text-align:right;font-size:11px;line-height:14px;color:#000">300,00</div>
<div style="position:absolute;left:39px;top:696px;width:425px;height:25px;background:#ededed"></div>
<div style="position:absolute;left:465px;top:696px;width:689px;height:25px;background:#fff"></div>
<div style="position:absolute;left:465px;top:721px;width:689px;height:1px;background:#e2e2e2"></div>
<div style="position:absolute;left:579px;top:696px;width:1px;height:26px;background:#e2e2e2"></div>
<div style="position:absolute;left:694px;top:696px;width:1px;height:26px;background:#e2e2e2"></div>
<div style="position:absolute;left:809px;top:696px;width:1px;height:26px;background:#e2e2e2"></div>
<div style="position:absolute;left:924px;top:696px;width:1px;height:26px;background:#e2e2e2"></div>
<div style="position:absolute;left:1039px;top:696px;width:1px;height:26px;background:#e2e2e2"></div>
<div style="position:absolute;left:3px;top:702px;width:36px;text-align:center;font-size:10px;line-height:14px;color:#a8a8a8">21</div>
<div style="position:absolute;left:104px;top:701px;font-size:11px;line-height:14px;color:#000;white-space:nowrap;word-spacing:0.5px">ООО "Черная металлургия-2"</div>
<svg style="left:441px;top:704px" width="10" height="9" viewBox="0 0 10 9"><path d="M0 0 H10 L9.4 2 H0.6 Z M1.6 3 H8.4 L8 5 H2 Z M2.9 6 H7.1 L5.6 8 H4.4 Z" fill="#9b9b9b"/></svg>
<div style="position:absolute;left:465px;top:701px;width:104px;text-align:right;font-size:11px;line-height:14px;color:#000">100,00</div>
<div style="position:absolute;left:695px;top:701px;width:104px;text-align:right;font-size:11px;line-height:14px;color:#000">100,00</div>
<div style="position:absolute;left:39px;top:722px;width:425px;height:25px;background:#ededed"></div>
<div style="position:absolute;left:465px;top:722px;width:689px;height:25px;background:#f2f2f2"></div>
<div style="position:absolute;left:465px;top:747px;width:689px;height:1px;background:#e2e2e2"></div>
<div style="position:absolute;left:579px;top:722px;width:1px;height:26px;background:#e2e2e2"></div>
<div style="position:absolute;left:694px;top:722px;width:1px;height:26px;background:#e2e2e2"></div>
<div style="position:absolute;left:809px;top:722px;width:1px;height:26px;background:#e2e2e2"></div>
<div style="position:absolute;left:924px;top:722px;width:1px;height:26px;background:#e2e2e2"></div>
<div style="position:absolute;left:1039px;top:722px;width:1px;height:26px;background:#e2e2e2"></div>
<div style="position:absolute;left:3px;top:728px;width:36px;text-align:center;font-size:10px;line-height:14px;color:#a8a8a8">22</div>
<div style="position:absolute;left:104px;top:727px;font-size:11px;line-height:14px;color:#000;white-space:nowrap;word-spacing:0.5px">ТЭЦ-1</div>
<svg style="left:441px;top:730px" width="10" height="9" viewBox="0 0 10 9"><path d="M0 0 H10 L9.4 2 H0.6 Z M1.6 3 H8.4 L8 5 H2 Z M2.9 6 H7.1 L5.6 8 H4.4 Z" fill="#9b9b9b"/></svg>
<div style="position:absolute;left:465px;top:727px;width:104px;text-align:right;font-size:11px;line-height:14px;color:#000">50,00</div>
<div style="position:absolute;left:695px;top:727px;width:104px;text-align:right;font-size:11px;line-height:14px;color:#000">50,00</div>
<div style="position:absolute;left:39px;top:748px;width:425px;height:25px;background:#ededed"></div>
<div style="position:absolute;left:465px;top:748px;width:689px;height:25px;background:#fff"></div>
<div style="position:absolute;left:465px;top:773px;width:689px;height:1px;background:#e2e2e2"></div>
<div style="position:absolute;left:579px;top:748px;width:1px;height:26px;background:#e2e2e2"></div>
<div style="position:absolute;left:694px;top:748px;width:1px;height:26px;background:#e2e2e2"></div>
<div style="position:absolute;left:809px;top:748px;width:1px;height:26px;background:#e2e2e2"></div>
<div style="position:absolute;left:924px;top:748px;width:1px;height:26px;background:#e2e2e2"></div>
<div style="position:absolute;left:1039px;top:748px;width:1px;height:26px;background:#e2e2e2"></div>
<div style="position:absolute;left:3px;top:754px;width:36px;text-align:center;font-size:10px;line-height:14px;color:#a8a8a8">23</div>
<div style="position:absolute;left:104px;top:753px;font-size:11px;line-height:14px;color:#000;white-space:nowrap;word-spacing:0.5px">ТЭЦ-2</div>
<svg style="left:441px;top:756px" width="10" height="9" viewBox="0 0 10 9"><path d="M0 0 H10 L9.4 2 H0.6 Z M1.6 3 H8.4 L8 5 H2 Z M2.9 6 H7.1 L5.6 8 H4.4 Z" fill="#9b9b9b"/></svg>
<div style="position:absolute;left:465px;top:753px;width:104px;text-align:right;font-size:11px;line-height:14px;color:#000">150,00</div>
<div style="position:absolute;left:695px;top:753px;width:104px;text-align:right;font-size:11px;line-height:14px;color:#000">150,00</div>
<div style="position:absolute;left:39px;top:774px;width:425px;height:25px;background:#ededed"></div>
<div style="position:absolute;left:465px;top:774px;width:689px;height:25px;background:#f2f2f2"></div>
<div style="position:absolute;left:465px;top:799px;width:689px;height:1px;background:#e2e2e2"></div>
<div style="position:absolute;left:579px;top:774px;width:1px;height:26px;background:#e2e2e2"></div>
<div style="position:absolute;left:694px;top:774px;width:1px;height:26px;background:#e2e2e2"></div>
<div style="position:absolute;left:809px;top:774px;width:1px;height:26px;background:#e2e2e2"></div>
<div style="position:absolute;left:924px;top:774px;width:1px;height:26px;background:#e2e2e2"></div>
<div style="position:absolute;left:1039px;top:774px;width:1px;height:26px;background:#e2e2e2"></div>
<div style="position:absolute;left:3px;top:780px;width:36px;text-align:center;font-size:10px;line-height:14px;color:#a8a8a8">24</div>
<div style="position:absolute;left:104px;top:779px;font-size:11px;line-height:14px;color:#000;white-space:nowrap;word-spacing:0.5px">АО "Логистика"</div>
<svg style="left:441px;top:782px" width="10" height="9" viewBox="0 0 10 9"><path d="M0 0 H10 L9.4 2 H0.6 Z M1.6 3 H8.4 L8 5 H2 Z M2.9 6 H7.1 L5.6 8 H4.4 Z" fill="#9b9b9b"/></svg>
<div style="position:absolute;left:465px;top:779px;width:104px;text-align:right;font-size:11px;line-height:14px;color:#000">300,00</div>
<div style="position:absolute;left:695px;top:779px;width:104px;text-align:right;font-size:11px;line-height:14px;color:#000">300,00</div>
<div style="position:absolute;left:39px;top:800px;width:425px;height:25px;background:#ededed"></div>
<div style="position:absolute;left:465px;top:800px;width:689px;height:25px;background:#fff"></div>
<div style="position:absolute;left:465px;top:825px;width:689px;height:1px;background:#e2e2e2"></div>
<div style="position:absolute;left:579px;top:800px;width:1px;height:26px;background:#e2e2e2"></div>
<div style="position:absolute;left:694px;top:800px;width:1px;height:26px;background:#e2e2e2"></div>
<div style="position:absolute;left:809px;top:800px;width:1px;height:26px;background:#e2e2e2"></div>
<div style="position:absolute;left:924px;top:800px;width:1px;height:26px;background:#e2e2e2"></div>
<div style="position:absolute;left:1039px;top:800px;width:1px;height:26px;background:#e2e2e2"></div>
<div style="position:absolute;left:3px;top:806px;width:36px;text-align:center;font-size:10px;line-height:14px;color:#a8a8a8">25</div>
<div style="position:absolute;left:82px;top:805px;font-size:11px;line-height:14px;color:#000;white-space:nowrap;word-spacing:0.5px">Доход от сдачи в аренду коммерческих активов</div>
<svg style="left:441px;top:808px" width="10" height="9" viewBox="0 0 10 9"><path d="M0 0 H10 L9.4 2 H0.6 Z M1.6 3 H8.4 L8 5 H2 Z M2.9 6 H7.1 L5.6 8 H4.4 Z" fill="#9b9b9b"/></svg>
<div style="position:absolute;left:39px;top:826px;width:425px;height:25px;background:#ededed"></div>
<div style="position:absolute;left:465px;top:826px;width:689px;height:25px;background:#f2f2f2"></div>
<div style="position:absolute;left:465px;top:851px;width:689px;height:1px;background:#e2e2e2"></div>
<div style="position:absolute;left:579px;top:826px;width:1px;height:26px;background:#e2e2e2"></div>
<div style="position:absolute;left:694px;top:826px;width:1px;height:26px;background:#e2e2e2"></div>
<div style="position:absolute;left:809px;top:826px;width:1px;height:26px;background:#e2e2e2"></div>
<div style="position:absolute;left:924px;top:826px;width:1px;height:26px;background:#e2e2e2"></div>
<div style="position:absolute;left:1039px;top:826px;width:1px;height:26px;background:#e2e2e2"></div>
<div style="position:absolute;left:3px;top:832px;width:36px;text-align:center;font-size:10px;line-height:14px;color:#a8a8a8">26</div>
<div style="position:absolute;left:82px;top:831px;font-size:11px;line-height:14px;color:#000;white-space:nowrap;word-spacing:0.5px">Доход от сдачи в аренду общехозяйственных активов</div>
<svg style="left:441px;top:834px" width="10" height="9" viewBox="0 0 10 9"><path d="M0 0 H10 L9.4 2 H0.6 Z M1.6 3 H8.4 L8 5 H2 Z M2.9 6 H7.1 L5.6 8 H4.4 Z" fill="#9b9b9b"/></svg>
<div style="position:absolute;left:579px;top:851px;width:1px;height:3px;background:#e2e2e2"></div>
<div style="position:absolute;left:694px;top:851px;width:1px;height:3px;background:#e2e2e2"></div>
<div style="position:absolute;left:809px;top:851px;width:1px;height:3px;background:#e2e2e2"></div>
<div style="position:absolute;left:924px;top:851px;width:1px;height:3px;background:#e2e2e2"></div>
<div style="position:absolute;left:1039px;top:851px;width:1px;height:3px;background:#e2e2e2"></div>
<div style="position:absolute;left:466px;top:644px;width:112px;height:24px;border:1px solid #e02020"></div>
<div style="position:absolute;left:39px;top:852px;width:425px;height:2px;background:#ececec;border-top:1px solid #fff"></div>
<div style="position:absolute;left:1160px;top:291px;width:7px;height:546px;background:#f0f0f0;border-left:1px solid #dedede;border-right:1px solid #dedede"></div>
<div style="position:absolute;left:1155px;top:274px;width:17px;height:17px;background:#f2f2f2;border:1px solid #e2e2e2;border-radius:3px"></div>
<svg style="left:1160px;top:280px" width="7" height="5"><path d="M0.6 4 H6.4 L3.5 0.6 Z" fill="#8a8a8a"/></svg>
<div style="position:absolute;left:1155px;top:292px;width:17px;height:254px;background:#fff;border:1px solid #e0e0e0;border-radius:3px"></div>
<div style="position:absolute;left:1155px;top:836px;width:17px;height:17px;background:#fff;border:1px solid #e2e2e2;border-radius:3px"></div>
<svg style="left:1160px;top:843px" width="7" height="5"><path d="M0 0 H7 L3.5 4 Z" fill="#555"/></svg>
<div style="position:absolute;left:22px;top:859px;width:1116px;height:7px;background:#f0f0f0;border-top:1px solid #dedede;border-bottom:1px solid #dedede"></div>
<div style="position:absolute;left:5px;top:854px;width:17px;height:17px;background:#f2f2f2;border:1px solid #e2e2e2;border-radius:3px"></div>
<svg style="left:11px;top:859px" width="5" height="7"><path d="M4 0.6 V6.4 L0.6 3.5 Z" fill="#8a8a8a"/></svg>
<div style="position:absolute;left:22px;top:854px;width:162px;height:17px;background:#fff;border:1px solid #e0e0e0;border-radius:3px"></div>
<div style="position:absolute;left:1138px;top:854px;width:17px;height:17px;background:#fff;border:1px solid #e2e2e2;border-radius:3px"></div>
<svg style="left:1144px;top:859px" width="5" height="7"><path d="M0 0 V7 L4 3.5 Z" fill="#555"/></svg>
</body></html>
